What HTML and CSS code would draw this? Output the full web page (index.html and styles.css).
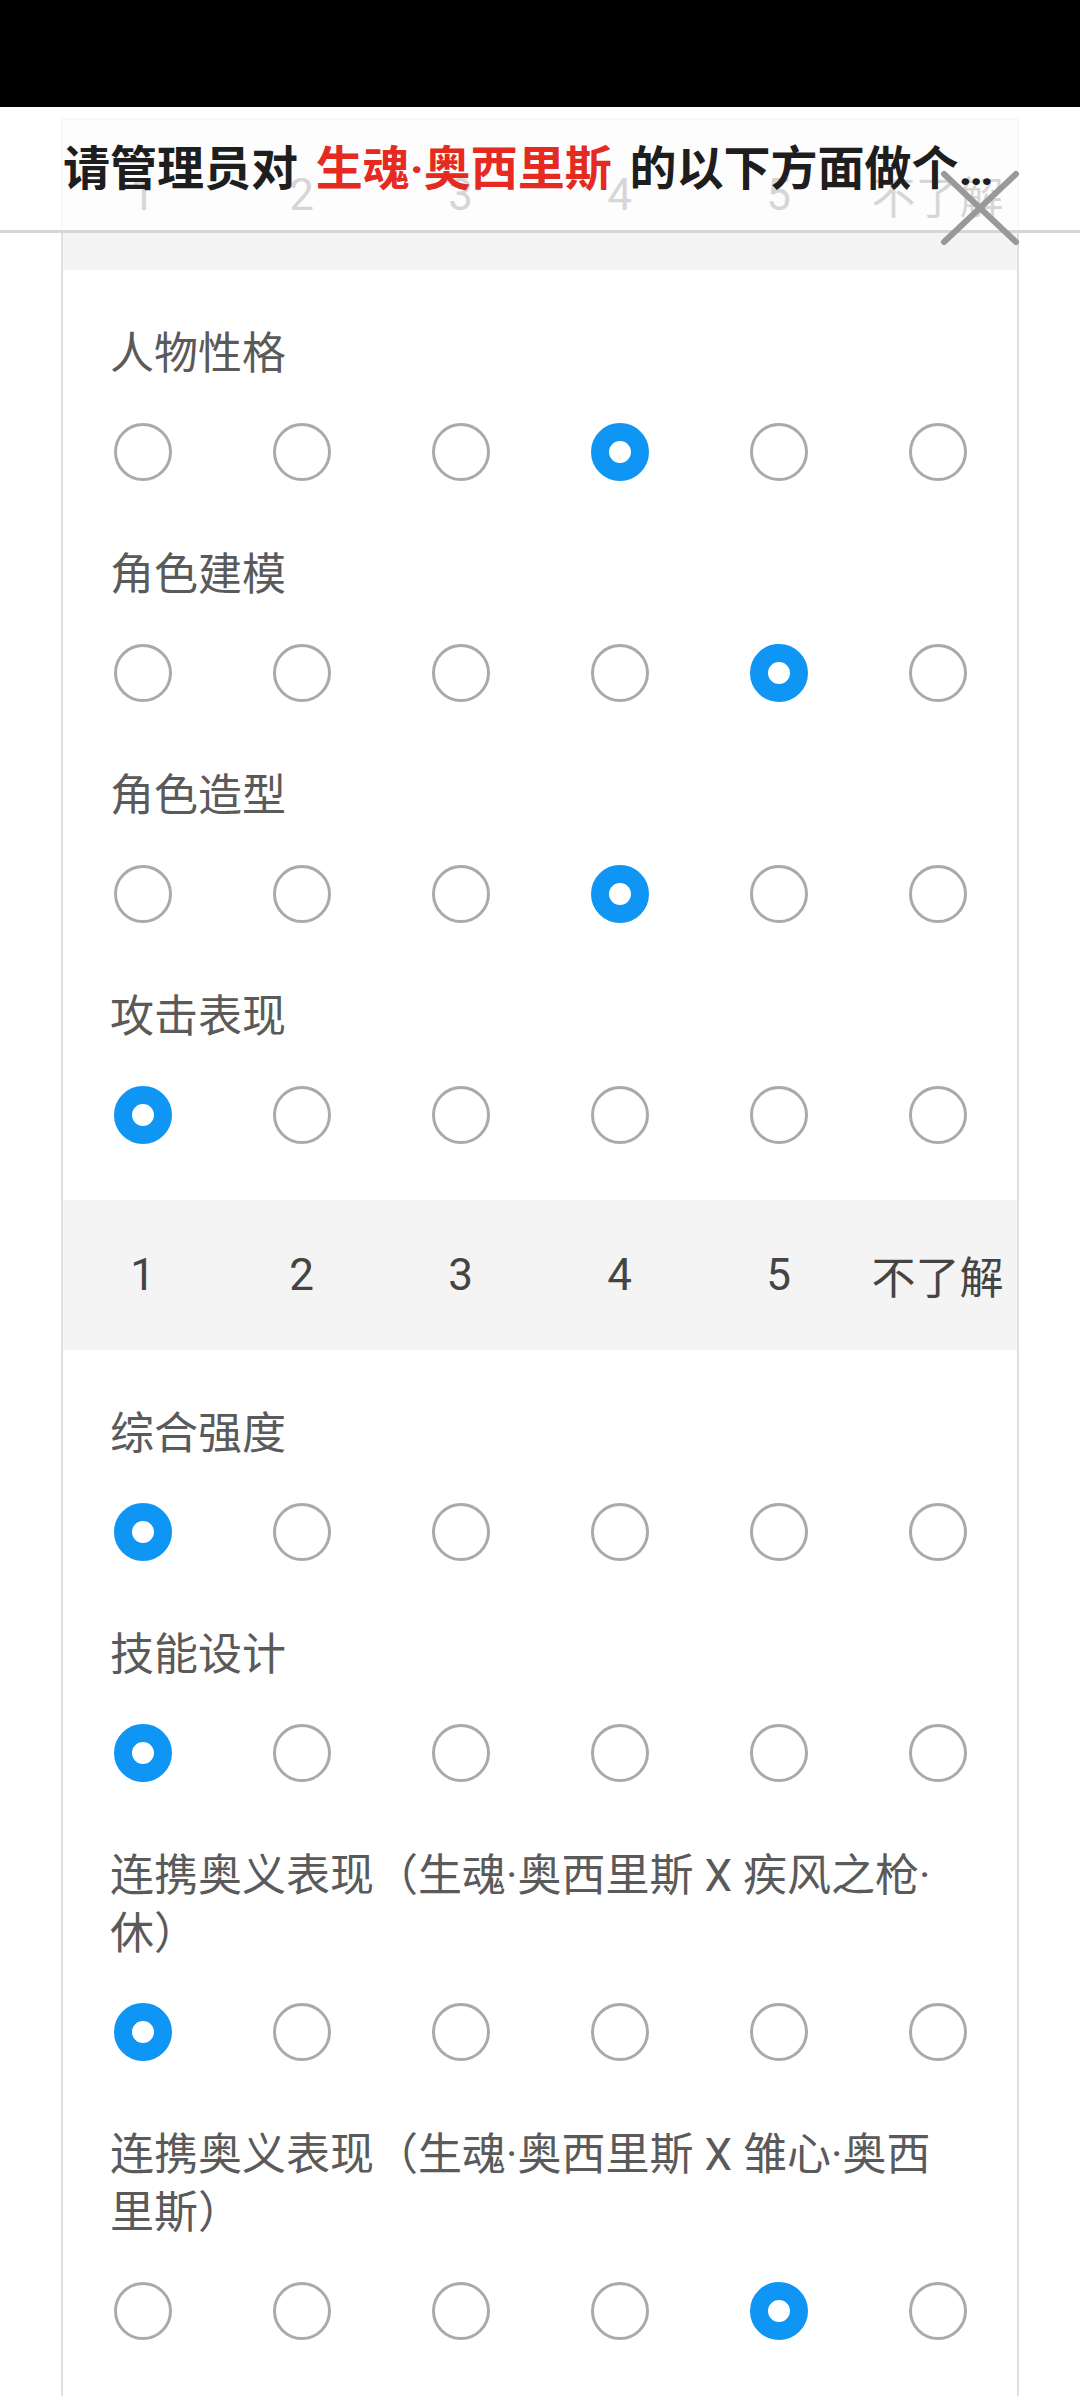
FILE: index.html
```html
<!DOCTYPE html>
<html lang="zh-CN">
<head>
    <meta charset="UTF-8">
    <meta name="viewport" content="width=device-width, initial-scale=1.0">
    <title>角色评分</title>
    <link rel="stylesheet" href="styles.css">
</head>
<body>

<div class="status-bar"></div>

<div class="screen">
    <div class="title-bar">
        <div class="title">请管理员对 <span class="hero">生魂·奥西里斯</span> 的以下方面做个评价</div>
        <svg class="close" viewBox="0 0 80 76" width="80" height="76">
            <line x1="4" y1="4" x2="76" y2="72"/>
            <line x1="76" y1="4" x2="4" y2="72"/>
        </svg>
    </div>

    <div class="card">
        <div class="scale-head">
            <span>1</span><span>2</span><span>3</span><span>4</span><span>5</span><span>不了解</span>
        </div>
        <div class="group">
            <div class="item">
                <div class="label">人物性格</div>
                <div class="options">
                    <input type="radio" name="q1"><input type="radio" name="q1"><input type="radio" name="q1">
                    <input type="radio" name="q1" checked><input type="radio" name="q1"><input type="radio" name="q1">
                </div>
            </div>
            <div class="item">
                <div class="label">角色建模</div>
                <div class="options">
                    <input type="radio" name="q2"><input type="radio" name="q2"><input type="radio" name="q2">
                    <input type="radio" name="q2"><input type="radio" name="q2" checked><input type="radio" name="q2">
                </div>
            </div>
            <div class="item">
                <div class="label">角色造型</div>
                <div class="options">
                    <input type="radio" name="q3"><input type="radio" name="q3"><input type="radio" name="q3">
                    <input type="radio" name="q3" checked><input type="radio" name="q3"><input type="radio" name="q3">
                </div>
            </div>
            <div class="item">
                <div class="label">攻击表现</div>
                <div class="options">
                    <input type="radio" name="q4" checked><input type="radio" name="q4"><input type="radio" name="q4">
                    <input type="radio" name="q4"><input type="radio" name="q4"><input type="radio" name="q4">
                </div>
            </div>
        </div>

        <div class="scale-head">
            <span>1</span><span>2</span><span>3</span><span>4</span><span>5</span><span>不了解</span>
        </div>
        <div class="group">
            <div class="item">
                <div class="label">综合强度</div>
                <div class="options">
                    <input type="radio" name="q5" checked><input type="radio" name="q5"><input type="radio" name="q5">
                    <input type="radio" name="q5"><input type="radio" name="q5"><input type="radio" name="q5">
                </div>
            </div>
            <div class="item">
                <div class="label">技能设计</div>
                <div class="options">
                    <input type="radio" name="q6" checked><input type="radio" name="q6"><input type="radio" name="q6">
                    <input type="radio" name="q6"><input type="radio" name="q6"><input type="radio" name="q6">
                </div>
            </div>
            <div class="item">
                <div class="label">连携奥义表现（生魂·奥西里斯 X 疾风之枪·休）</div>
                <div class="options">
                    <input type="radio" name="q7" checked><input type="radio" name="q7"><input type="radio" name="q7">
                    <input type="radio" name="q7"><input type="radio" name="q7"><input type="radio" name="q7">
                </div>
            </div>
            <div class="item">
                <div class="label">连携奥义表现（生魂·奥西里斯 X 雏心·奥西里斯）</div>
                <div class="options">
                    <input type="radio" name="q8"><input type="radio" name="q8"><input type="radio" name="q8">
                    <input type="radio" name="q8"><input type="radio" name="q8" checked><input type="radio" name="q8">
                </div>
            </div>
        </div>
    </div>
</div>

</body>
</html>
```

FILE: styles.css
```css
html, body {
    margin: 0;
    height: 2400px;
    overflow: hidden;
    background-color: #fff;
    font-family: Roboto, "Noto Sans CJK SC", sans-serif;
}
.status-bar {
    height: 107px;
    background-color: #000;
}
.screen {
    position: relative;
    height: 2293px;
    overflow: hidden;
    padding-top: 11px;
    box-sizing: border-box;
}
/* title floats over the list, list shows through it */
.title-bar {
    position: absolute;
    top: 0;
    left: 0;
    right: 0;
    height: 123px;
    background-color: rgba(255, 255, 255, 0.78);
    border-bottom: 3px solid #d6d6d6;
    z-index: 2;
}
.title {
    width: 1012px;
    box-sizing: border-box;
    padding-left: 63px;
    font-size: 47px;
    font-weight: 700;
    line-height: 123px;
    word-spacing: 6px;
    color: #1e1e1e;
    white-space: nowrap;
    overflow: hidden;
    text-overflow: ellipsis;
}
.title .hero {
    color: #e52a22;
}
.close {
    position: absolute;
    left: 940px;
    top: 63px;
}
.close line {
    stroke: #999;
    stroke-width: 6;
    stroke-linecap: round;
}
.card {
    margin: 0 61px;
    border: 2px solid #e0e0e0;
    border-bottom: none;
    background-color: #fff;
}
.scale-head {
    height: 150px;
    background-color: #f4f4f4;
    display: grid;
    grid-template-columns: repeat(6, 1fr);
    align-items: center;
    justify-items: center;
    font-size: 44px;
    color: #444;
}
.group {
    display: flex;
    flex-direction: column;
    gap: 65px;
    padding: 55px 0 56px;
}
.label {
    padding: 0 50px 0 47px;
    margin-bottom: 40px;
    font-size: 44px;
    line-height: 58px;
    color: #5a5a5a;
}
.options {
    display: grid;
    grid-template-columns: repeat(6, 1fr);
    justify-items: center;
}
.options input {
    -webkit-appearance: none;
    appearance: none;
    margin: 0;
    width: 58px;
    height: 58px;
    box-sizing: border-box;
    border: 3px solid #aaa;
    border-radius: 50%;
    background-color: #fff;
}
.options input:checked {
    border: 18px solid #0f95f4;
}
```
